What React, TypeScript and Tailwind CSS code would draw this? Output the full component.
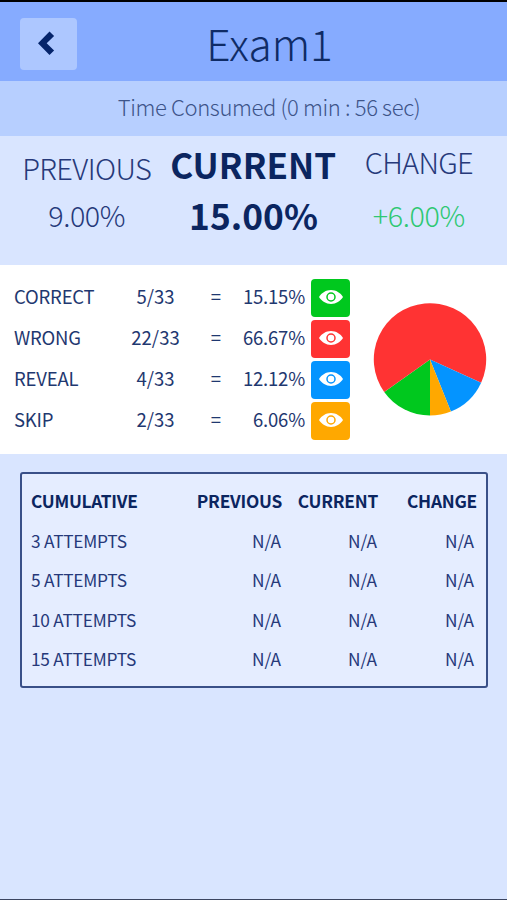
const results = [
  { label: 'CORRECT', count: 5, percent: '15.15%', button: 'bg-[#00c81e]', color: '#00c81e' },
  { label: 'WRONG', count: 22, percent: '66.67%', button: 'bg-[#ff3333]', color: '#ff3333' },
  { label: 'REVEAL', count: 4, percent: '12.12%', button: 'bg-[#0494ff]', color: '#0494ff' },
  { label: 'SKIP', count: 2, percent: '6.06%', button: 'bg-[#ffa800]', color: '#ffa800' },
];

const TOTAL = 33;

const attempts = [3, 5, 10, 15];

// Slices run clockwise, starting at the bottom of the circle
function PieChart() {
  const r = 56.2;
  let angle = Math.PI / 2;

  return (
    <svg width="114" height="114" viewBox="-57 -57.4 114 114">
      {results.map(({ label, count, color }) => {
        const start = angle;
        const sweep = (count / TOTAL) * Math.PI * 2;
        angle += sweep;
        const x1 = r * Math.cos(start);
        const y1 = r * Math.sin(start);
        const x2 = r * Math.cos(angle);
        const y2 = r * Math.sin(angle);
        return (
          <path
            key={label}
            fill={color}
            d={`M0 0L${x1} ${y1}A${r} ${r} 0 ${sweep > Math.PI ? 1 : 0} 1 ${x2} ${y2}Z`}
          />
        );
      })}
    </svg>
  );
}

function EyeIcon({ color }: { color: string }) {
  return (
    <svg width="24" height="14" viewBox="0 0 24 14">
      <path fill="#fff" d="M0 7C2.6 2.9 7 .1 12 .1S21.4 2.9 24 7c-2.6 4.1-7 6.9-12 6.9S2.6 11.1 0 7Z" />
      <circle cx="12" cy="7" r="4" fill="#fff" stroke={color} strokeWidth="1.5" />
    </svg>
  );
}

export default function App() {
  return (
    <div className="flex h-[900px] w-[507px] flex-col overflow-hidden whitespace-nowrap border-b border-t-2 border-b-[#3c4561] border-t-black bg-[#d9e5ff] font-['Noto_Sans_CJK_SC',sans-serif] text-[#0f2b66]">
      <header className="grid h-[79px] shrink-0 grid-cols-[77px_1fr_77px] items-center bg-[#86abff]">
        <button className="ml-5 mt-1 flex h-[52px] w-[57px] items-center justify-center rounded bg-[#adc7ff]">
          <svg width="17" height="24" viewBox="0 0 17 24" className="-mt-px mr-1">
            <path fill="#05246b" d="M0 12.3 11.5.6l4.6 4.4-7.4 7.3 7.4 7.3-4.6 4.4Z" />
          </svg>
        </button>
        <h1 className="mt-0.5 pl-8 text-center text-[42.5px] leading-[60px] font-light">Exam1</h1>
      </header>

      <div className="h-[55px] shrink-0 bg-[#b7cfff] pl-[31px] text-center text-[22px] leading-[50px] font-light tracking-[-0.35px] text-[#3d5489]">
        Time Consumed (0 min : 56 sec)
      </div>

      <section className="grid h-[129px] shrink-0 grid-cols-3 px-1 text-center">
        <div className="pr-px pt-3 font-light text-[#26397a]">
          <div className="text-[29px] leading-[39px] tracking-[-0.6px]">PREVIOUS</div>
          <div className="mt-[8px] text-[28.7px] leading-[40px] tracking-[-0.4px]">9.00%</div>
        </div>
        <div className="pr-[3px] pt-2 font-bold text-[#0b2560]">
          <div className="text-[35px] leading-[40px]">CURRENT</div>
          <div className="mt-[11px] pl-[3px] text-[35.3px] leading-[40px]">15.00%</div>
        </div>
        <div className="pr-0.5 pt-[5px] font-light text-[#26397a]">
          <div className="text-[29px] leading-[40px] tracking-[-0.7px]">CHANGE</div>
          <div className="mt-[14px] text-[28.7px] leading-[40px] tracking-[-0.4px] text-[#2fc873]">+6.00%</div>
        </div>
      </section>

      <section className="flex h-[189px] shrink-0 items-center bg-white">
        <div className="-mt-px flex flex-col gap-[3px] pl-[14px] text-[18.5px]">
          {results.map(({ label, count, percent, button, color }) => (
            <div key={label} className="grid h-[38px] grid-cols-[99px_85px_36px_72px_45px] leading-[35px] text-[#1f3870]">
              <span className="tracking-[-0.2px]">{label}</span>
              <span className="text-center">{count}/{TOTAL}</span>
              <span className="text-center">=</span>
              <span className="pr-px text-right tracking-[-0.2px]">{percent}</span>
              <button className={`ml-[5px] flex h-[38px] w-[39px] items-center justify-center rounded pb-px ${button}`}>
                <EyeIcon color={color} />
              </button>
            </div>
          ))}
        </div>
        <div className="-mt-px ml-[22px]">
          <PieChart />
        </div>
      </section>

      <section className="mx-5 mt-[18px] h-[216px] w-[468px] rounded-[3px] border-2 border-[#3a5088] bg-[#e5edff] pl-[9px] pt-[7px] text-[17.3px] leading-[39.5px]">
        <div className="grid grid-cols-[150px_101px_96px_99px] font-bold tracking-[-0.25px] text-[#0b2560]">
          <span>CUMULATIVE</span>
          <span className="text-right">PREVIOUS</span>
          <span className="text-right">CURRENT</span>
          <span className="text-right">CHANGE</span>
        </div>
        {attempts.map((n) => (
          <div key={n} className="grid grid-cols-[150px_100px_96px_97px] text-[#26397a]">
            <span className="tracking-[-0.25px]">{n} ATTEMPTS</span>
            <span className="text-right">N/A</span>
            <span className="text-right">N/A</span>
            <span className="text-right">N/A</span>
          </div>
        ))}
      </section>
    </div>
  );
}
